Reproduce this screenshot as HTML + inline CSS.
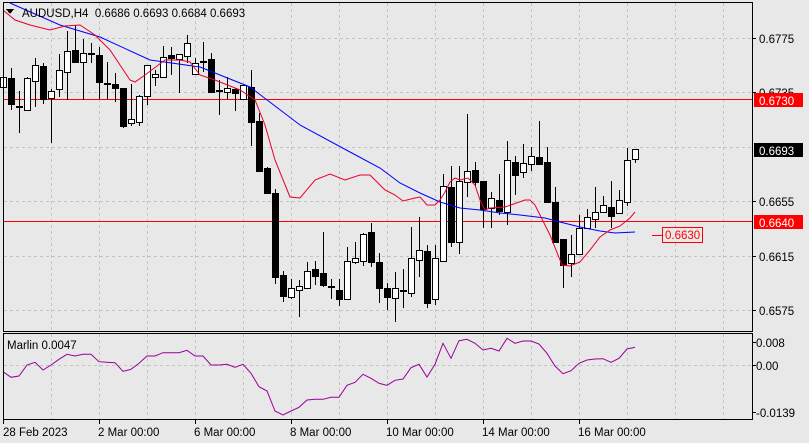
<!DOCTYPE html>
<html><head><meta charset="utf-8"><style>
html,body{margin:0;padding:0;background:#e8e8e8;width:809px;height:443px;overflow:hidden}
svg{display:block}
text{font-family:"Liberation Sans","DejaVu Sans",sans-serif;font-size:11.5px}
</style></head><body>
<svg id="s" width="809" height="443" xmlns="http://www.w3.org/2000/svg" shape-rendering="crispEdges">
<rect width="809" height="443" fill="#e8e8e8"/>
<g id="grid" stroke="#c4c4c4" stroke-dasharray="3,3" stroke-width="1"></g>
<line x1="3" y1="99.5" x2="752" y2="99.5" stroke="#f00"/>
<line x1="3" y1="221.5" x2="752" y2="221.5" stroke="#f00"/>
<g id="cd"></g>
<polyline shape-rendering="auto" fill="none" stroke="#0000ff" stroke-width="1" points="10,3 60,25 100,37 150,60 200,67 250,87 300,125 350,152 380,168 400,183 420,193 440,202 460,208 480,210 500,213 520,215 545,218 560,222 580,227 600,231 615,233 635,232"/>
<polyline shape-rendering="auto" fill="none" stroke="#e8002a" stroke-width="1" points="3,10 15,20 30,25 50,30 65,26 80,25 95,35 110,50 130,80 135,82 145,75 165,60 180,60 190,62 200,75 215,80 240,90 255,100 265,125 275,160 290,197 300,198 315,180 330,174 345,180 360,175 370,175 385,190 395,195 403,201 415,198 420,197 427,205 435,205 440,200 445,192 450,182 455,178 460,180 468,178 475,185 480,200 485,210 490,208 505,207 525,200 530,200 535,205 540,215 550,235 562,265 570,266 580,262 590,250 600,237 610,230 620,226 630,218 635,212"/>
<polyline id="mar" shape-rendering="auto" fill="none" stroke="#990099" stroke-width="1" points=""/>
<!-- frames -->
<rect x="3.5" y="2.5" width="749" height="329" fill="none" stroke="#000"/>
<rect x="3.5" y="333.5" width="749" height="86" fill="none" stroke="#000"/>
<!-- header -->
<polygon points="6,9 14,9 10,14" fill="#000"/>
<text x="22" y="17" fill="#000">AUDUSD,H4&#160;&#160;0.6686 0.6693 0.6684 0.6693</text>
<!-- right axis -->
<g stroke="#000"><line x1="752" y1="38.5" x2="756" y2="38.5"/><line x1="752" y1="92.5" x2="756" y2="92.5"/><line x1="752" y1="201.5" x2="756" y2="201.5"/><line x1="752" y1="256.5" x2="756" y2="256.5"/><line x1="752" y1="310.5" x2="756" y2="310.5"/><line x1="752" y1="342.5" x2="756" y2="342.5"/><line x1="752" y1="365.5" x2="756" y2="365.5"/><line x1="752" y1="412.5" x2="756" y2="412.5"/></g>
<text x="759" y="43" fill="#000">0.6775</text>
<text x="759" y="97" fill="#000">0.6735</text>
<text x="759" y="206" fill="#000">0.6655</text>
<text x="759" y="261" fill="#000">0.6615</text>
<text x="759" y="315" fill="#000">0.6575</text>
<rect x="754" y="93" width="49" height="14" fill="#f00"/>
<text x="759" y="105" fill="#fff">0.6730</text>
<rect x="754" y="143" width="49" height="14" fill="#000"/>
<text x="759" y="155" fill="#fff">0.6693</text>
<rect x="754" y="215" width="49" height="14" fill="#f00"/>
<text x="759" y="227" fill="#fff">0.6640</text>
<line x1="652" y1="235.5" x2="662" y2="235.5" stroke="#f00"/>
<rect x="662.5" y="227.5" width="40" height="15" fill="#e8e8e8" stroke="#f00"/>
<text x="665" y="239" fill="#f00">0.6630</text>
<text x="756" y="347" fill="#000">0.008</text>
<text x="756" y="370" fill="#000">0.00</text>
<text x="756" y="417" fill="#000">-0.0139</text>
<text x="7" y="349" fill="#000">Marlin 0.0047</text>
<!-- time axis -->
<g stroke="#000"><line x1="3.5" y1="420" x2="3.5" y2="424"/><line x1="99.5" y1="420" x2="99.5" y2="424"/><line x1="195.5" y1="420" x2="195.5" y2="424"/><line x1="291.5" y1="420" x2="291.5" y2="424"/><line x1="387.5" y1="420" x2="387.5" y2="424"/><line x1="483.5" y1="420" x2="483.5" y2="424"/><line x1="579.5" y1="420" x2="579.5" y2="424"/></g>
<text x="3" y="436" fill="#000">28 Feb 2023</text>
<text x="98" y="436" fill="#000">2 Mar 00:00</text>
<text x="194" y="436" fill="#000">6 Mar 00:00</text>
<text x="290" y="436" fill="#000">8 Mar 00:00</text>
<text x="386" y="436" fill="#000">10 Mar 00:00</text>
<text x="482" y="436" fill="#000">14 Mar 00:00</text>
<text x="578" y="436" fill="#000">16 Mar 00:00</text>
</svg>
<script>
var NS="http://www.w3.org/2000/svg";
function el(p,t,a){var e=document.createElementNS(NS,t);for(var k in a)e.setAttribute(k,a[k]);p.appendChild(e);return e;}
var g=document.getElementById("grid");
[51,99,147,195,243,291,339,387,435,483,531,579,627,675,723].forEach(function(x){
 el(g,"line",{x1:x+.5,y1:3,x2:x+.5,y2:331});el(g,"line",{x1:x+.5,y1:334,x2:x+.5,y2:419});});
[38,92,147,201,256,310].forEach(function(y){el(g,"line",{x1:4,y1:y+.5,x2:752,y2:y+.5});});
el(g,"line",{x1:4,y1:365.5,x2:752,y2:365.5});
// [bodyTop, bodyBottom, wickTop, wickBottom, white?]
var D=[[77,87,68,100,1],[78,104,68,110,0],[106,108,91,133,0],[78,110,77,110,1],[65,81,58,107,1],[66,99,63,104,0],[91,98,89,143,1],[70,89,54,97,1],[51,72,31,100,1],[50,62,25,63,0],[53,62,39,100,1],[53,54,43,63,0],[55,82,47,99,0],[83,85,62,99,0],[84,88,73,102,0],[88,126,88,128,0],[119,123,84,126,1],[96,122,95,126,1],[65,96,65,105,1],[74,77,70,86,1],[57,77,46,77,1],[55,58,47,75,0],[54,59,54,93,1],[43,56,35,63,1],[63,74,58,75,1],[61,62,42,72,0],[59,92,53,92,0],[90,92,80,115,0],[88,92,77,99,1],[89,93,88,111,0],[85,99,85,100,1],[87,122,70,146,0],[121,171,113,172,0],[168,193,167,194,0],[193,277,189,284,0],[275,296,271,302,0],[288,297,279,299,1],[286,290,280,317,1],[271,288,262,289,1],[269,276,261,285,0],[273,285,232,287,0],[286,288,279,299,0],[290,299,279,306,0],[261,299,247,299,1],[258,262,242,264,1],[234,261,233,266,1],[232,262,223,267,0],[262,288,253,303,0],
[288,297,283,310,0],[288,298,272,322,1],[290,292,269,308,0],[258,293,227,297,1],[250,260,217,277,1],[251,303,245,308,0],[258,299,245,305,1],[186,261,174,262,1],[187,242,166,247,0],[181,242,166,254,1],[171,182,114,197,1],[170,182,162,187,0],[181,209,181,228,0],[198,208,192,228,1],[200,211,174,215,0],[160,212,141,225,1],[162,175,156,195,0],[163,172,144,178,1],[156,164,147,171,1],[157,164,121,164,0],[162,202,147,202,0],[202,242,187,242,0],[239,265,239,288,0],[254,263,235,277,1],[228,254,215,255,1],[217,228,209,229,1],[212,219,187,228,1],[205,212,196,213,1],[207,216,181,228,0],[200,213,190,214,1],[160,202,148,206,1],[149,159,149,163,1]];
var c=document.getElementById("cd");
D.forEach(function(d,k){var x=3+8*k;
 el(c,"rect",{x:x,y:d[2],width:1,height:Math.max(1,d[3]-d[2]),fill:"#000"});
 if(d[1]-d[0]<=2){el(c,"rect",{x:x-3,y:d[0],width:7,height:2,fill:"#000"});}
 else if(d[4]){el(c,"rect",{x:x-2.5,y:d[0]+.5,width:6,height:d[1]-d[0],fill:"#fff",stroke:"#000"});}
 else{el(c,"rect",{x:x-3,y:d[0],width:7,height:d[1]-d[0]+1,fill:"#000"});}
});
var m1=[515,532,528,495,487,510,495,478,463,468,463,463,485,487,488,514,508,490,468,468,458,458,458,451,468,468,495,495,493,502,493,520,560,573,633,645,633,622,600,598,598,592,592,556,547,523,535,550];
var m2=[181,166,162,128,118,156,118,55,100,47,43,55,75,70,78,40,55,48,48,57,85,123,146,137,115,105,102,101,112,100,72,67];
var pts=[];m1.forEach(function(y,k){pts.push((3+8*k)+","+(200+y/3).toFixed(1));});
m2.forEach(function(y,i){pts.push((3+8*(48+i))+","+(325+y/3).toFixed(1));});
document.getElementById("mar").setAttribute("points",pts.join(" "));
</script>
</body></html>
